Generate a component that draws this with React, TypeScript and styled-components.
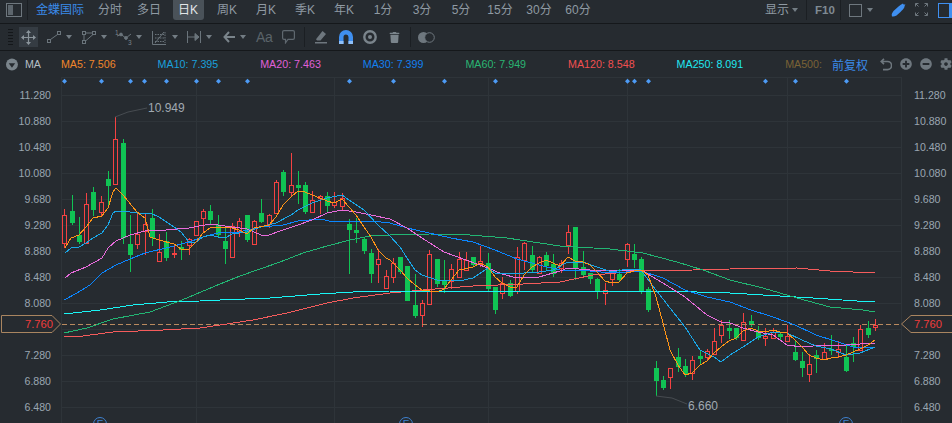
import React from "react";
import styled, { createGlobalStyle } from "styled-components";
import { FaCog, FaMinusCircle, FaPlusCircle, FaTrash } from "react-icons/fa";

const Global = createGlobalStyle`
  html, body { margin: 0; padding: 0; background: #262b30; overflow: hidden; }
  #root { width: 952px; height: 423px; }
`;

const FONT = `"Liberation Sans", "Noto Sans CJK SC", sans-serif`;

const Page = styled.div`
  width: 952px;
  height: 423px;
  display: flex;
  flex-direction: column;
  overflow: hidden;
  background: #262b30;
  font-family: ${FONT};
  color: #8f9aa3;
`;

const TopBar = styled.div`
  height: 23px;
  flex: none;
  display: flex;
  align-items: flex-start;
  border-bottom: 1px solid #15181b;
  font-size: 12px;
  overflow: hidden;
`;

const PanelToggle = styled.div`
  width: 14px;
  height: 12px;
  margin: 3px 0 0 6px;
  border: 1px solid #6e777e;
  display: flex;
  &::before { content: ""; width: 5px; margin: 1px; background: #5d666d; }
`;

const VSep = styled.div<{ $ml: number; $h?: number }>`
  width: 1px;
  height: ${(p) => p.$h ?? 20}px;
  margin-left: ${(p) => p.$ml}px;
  background: #1b1f23;
`;

const Brand = styled.div`
  width: 48px;
  margin-left: 8px;
  line-height: 20px;
  color: #3a8ae8;
  white-space: nowrap;
`;

const Tabs = styled.div`
  display: flex;
  margin-left: 6.5px;
`;

const Tab = styled.div<{ $active?: boolean }>`
  width: 31px;
  margin: 0 4px;
  height: 20px;
  line-height: 20px;
  text-align: center;
  white-space: nowrap;
  border-radius: 0 0 3px 3px;
  background: ${(p) => (p.$active ? "#4a5259" : "transparent")};
  color: ${(p) => (p.$active ? "#e2e6e8" : "#8f9aa3")};
`;

const BarRight = styled.div`
  margin-left: auto;
  display: flex;
  align-items: flex-start;
`;

const ShowLabel = styled.div`
  line-height: 20px;
  display: flex;
  align-items: center;
  gap: 3px;
`;

const Caret = styled.span<{ $c?: string }>`
  display: inline-block;
  width: 0;
  height: 0;
  flex: none;
  border-left: 3.5px solid transparent;
  border-right: 3.5px solid transparent;
  border-top: 4px solid ${(p) => p.$c ?? "#737d84"};
`;

const F10 = styled.div`
  margin-left: 8px;
  width: 18px;
  line-height: 20px;
  font-size: 11.5px;
  font-weight: 700;
  color: #7f8a92;
`;

const ColorBox = styled.div`
  display: flex;
  align-items: center;
  gap: 5px;
  height: 20px;
  margin-left: 8px;
`;

const Square = styled.div`
  width: 11px;
  height: 11px;
  border: 1px solid #6e777e;
`;

const TopIcon = styled.svg<{ $ml: number }>`
  flex: none;
  margin: 3px 0 0 ${(p) => p.$ml}px;
`;

const LayoutIcon = styled.div`
  flex: none;
  width: 14px;
  height: 13px;
  margin: 3px -1px 0 10px;
  border: 1px solid #3f8ff0;
  border-right: 0;
  display: flex;
  justify-content: flex-end;
  &::after { content: ""; width: 4px; background: #3f8ff0; margin: 0; }
`;

const ToolBar = styled.div`
  height: 26px;
  flex: none;
  display: flex;
  align-items: center;
  padding-left: 8px;
  border-bottom: 1px solid #15181b;
`;

const Grip = styled.div`
  width: 5px;
  height: 17px;
  background: repeating-linear-gradient(to bottom, #14171a 0 1px, transparent 1px 3px);
`;

const MoveButton = styled.div`
  width: 19px;
  height: 20px;
  margin-left: 6px;
  display: flex;
  align-items: center;
  justify-content: center;
  background: #353c43;
`;

const Tool = styled.div<{ $ml: number; $gap?: number }>`
  display: flex;
  align-items: center;
  gap: ${(p) => p.$gap ?? 5}px;
  margin-left: ${(p) => p.$ml}px;
  flex: none;
  color: #6a747b;
`;

const AaLabel = styled.span`
  width: 15px;
  font-size: 14px;
  color: #5a6369;
  letter-spacing: -0.4px;
  white-space: nowrap;
`;

const MaBar = styled.div`
  height: 26px;
  flex: none;
  display: flex;
  align-items: center;
  padding-left: 6px;
  font-size: 10.7px;
  white-space: nowrap;
`;

const MaName = styled.span`
  margin-left: 7px;
  width: 35px;
  color: #b6bec4;
  margin-right: 4px;
`;

const MaList = styled.div`
  display: flex;
  gap: 42px;
`;

const MaItem = styled.span<{ $c: string }>`
  color: ${(p) => p.$c};
`;

const Adjust = styled.span`
  margin-left: 10px;
  font-size: 12px;
  color: #3a8ae8;
`;

const MaTools = styled.div`
  display: flex;
  align-items: center;
  margin-left: 12px;
  gap: 8px;
  color: #6e777e;
`;

const ChartGrid = styled.div`
  flex: 1;
  position: relative;
  display: grid;
  grid-template-columns: 61px 841px 50px;
  min-height: 0;
  overflow: hidden;
`;

const Axis = styled.div<{ $right?: boolean }>`
  display: flex;
  flex-direction: column;
  padding-top: 5px;
  font-size: 10.6px;
  color: #9aa6b0;
  text-align: ${(p) => (p.$right ? "left" : "right")};
  padding-${(p) => (p.$right ? "left" : "right")}: ${(p) => (p.$right ? 12 : 10)}px;
`;

const AxisLabel = styled.div<{ $hidden?: boolean }>`
  height: 26px;
  line-height: 26px;
  flex: none;
  visibility: ${(p) => (p.$hidden ? "hidden" : "visible")};
`;

const Plot = styled.svg`
  display: block;
  width: 841px;
  height: 346px;
`;

const PriceTag = styled.div<{ $right?: boolean }>`
  position: absolute;
  top: 238px;
  ${(p) => (p.$right ? "left: 901px; width: 51px;" : "left: 1px; width: 60px;")}
  height: 18px;
  line-height: 18px;
  font-size: 11.2px;
  color: #f03c3c;
  box-sizing: border-box;
  ${(p) => (p.$right ? "padding-left: 13px;" : "padding-right: 8px; text-align: right;")}
`;

const TagShape = styled.svg`
  position: absolute;
  left: 0;
  top: 0;
  width: 100%;
  height: 100%;
`;

const TagText = styled.span`
  position: relative;
`;

type C = [number, number, number, number, number, "r" | "g"];
const candles: C[] = [
  [64,215,243,209,248,"r"],[72,211,223,195,225,"g"],[79,235,242,217,244,"g"],[86,204,243,193,244,"r"],
  [93,192,210,187,216,"g"],[101,202,212,196,216,"r"],[108,179,186,171,205,"g"],[115,139,184,117,185,"r"],
  [123,143,238,139,244,"g"],[130,244,255,215,272,"g"],[137,234,244,214,249,"r"],[145,224,231,214,255,"r"],
  [152,218,238,209,246,"g"],[159,252,261,234,262,"r"],[166,241,258,232,261,"g"],[174,253,254,245,258,"r"],
  [181,247,250,241,260,"g"],[189,239,245,238,255,"r"],[196,221,235,221,235,"r"],[203,211,218,209,232,"r"],
  [210,211,220,205,225,"g"],[218,225,235,215,238,"g"],[225,241,249,228,264,"g"],[232,226,257,223,257,"r"],
  [239,221,231,218,237,"r"],[247,215,240,215,242,"g"],[254,221,244,220,244,"r"],[261,213,222,199,223,"g"],
  [269,215,224,214,228,"r"],[276,182,213,180,214,"r"],[283,172,192,170,196,"g"],[291,185,192,153,197,"r"],
  [298,185,188,171,204,"g"],[305,185,212,182,214,"g"],[312,200,212,191,213,"r"],[320,196,198,195,214,"r"],
  [327,196,206,192,212,"g"],[334,202,205,192,208,"r"],[342,198,206,193,210,"r"],[349,224,230,219,274,"g"],
  [356,230,233,218,243,"g"],[364,239,251,238,254,"g"],[371,253,274,249,283,"g"],[378,259,264,249,283,"r"],
  [386,276,288,270,288,"r"],[393,263,277,258,283,"r"],[400,257,272,257,274,"g"],[407,266,301,266,301,"g"],
  [415,305,316,274,318,"g"],[422,303,315,300,327,"r"],[429,254,304,250,305,"r"],[437,259,284,259,287,"g"],
  [444,281,285,260,293,"g"],[451,269,281,264,289,"r"],[459,259,277,252,278,"r"],[466,260,270,252,271,"r"],
  [473,257,265,257,267,"g"],[480,261,264,246,267,"r"],[488,263,289,253,292,"g"],[495,287,310,287,314,"g"],
  [502,283,293,277,299,"r"],[510,283,296,280,297,"g"],[517,257,291,247,294,"r"],[524,243,260,242,270,"r"],
  [532,255,270,246,273,"g"],[539,257,273,256,273,"r"],[546,255,266,252,270,"g"],[553,264,274,254,277,"g"],
  [561,263,268,260,273,"r"],[568,232,245,225,254,"r"],[575,227,269,227,280,"g"],[583,267,275,251,277,"g"],
  [590,273,279,273,284,"g"],[597,279,291,278,299,"g"],[605,290,293,283,305,"r"],[612,273,279,270,286,"r"],
  [619,274,280,269,282,"g"],[627,244,259,243,267,"r"],[634,254,260,244,268,"g"],[641,259,292,257,294,"g"],
  [648,289,310,287,312,"g"],[656,368,381,361,396,"g"],[663,380,388,376,390,"g"],[670,368,377,368,389,"r"],
  [678,357,367,348,372,"g"],[685,366,374,359,377,"g"],[692,360,373,356,380,"r"],[700,356,359,350,364,"g"],
  [707,351,357,349,360,"r"],[714,341,354,328,355,"r"],[721,325,335,320,343,"r"],[729,328,331,320,339,"g"],
  [736,328,338,328,340,"g"],[743,322,340,313,341,"r"],[751,321,325,315,327,"g"],[758,332,338,326,340,"g"],
  [765,336,338,328,346,"r"],[773,332,338,328,338,"r"],[780,334,337,332,341,"g"],[787,336,341,325,342,"r"],
  [795,352,360,340,361,"g"],[802,361,368,352,377,"g"],[809,364,374,354,382,"r"],[816,355,359,350,373,"g"],
  [824,352,359,343,360,"r"],[831,349,351,335,355,"g"],[838,349,352,341,358,"r"],[846,357,371,345,372,"g"],
  [853,343,347,337,362,"g"],[860,329,350,325,351,"r"],[868,328,335,321,338,"g"],[875,325,327,319,331,"r"],
];

const lines: { c: string; p: string }[] = [
  { c: "#f55c5c", p: "64,337 83,336 113,332 163,330 200,328 220,325 253,320 287,313 327,303 353,298 390,293 423,290 473,286 523,284 560,282 593,275 640,271 693,270 730,269 797,268 830,271 875,273" },
  { c: "#19f5f5", p: "64,314 100,310 133,305 167,302 200,301 220,300 270,298 320,294 353,292 390,291 560,291 680,291 697,292 730,293 763,295 813,298 857,301 875,302" },
  { c: "#22b573", p: "64,333 87,328 113,319 150,312 182,300 220,284 240,276 260,269 280,262 303,253 327,246 350,240 370,236 390,235 430,234 470,235 507,238 533,242 560,246 610,249 643,253 677,262 703,270 730,280 763,288 797,298 830,307 863,310 875,312" },
  { c: "#0a86ff", p: "64,300 77,293 90,285 102,273 116,265 130,259 145,253 166,248 189,242 203,237 218,233 239,232 261,227 283,225 298,221 320,219 334,222 349,221 371,221 390,223 407,228 429,233 451,238 473,242 495,250 517,259 539,265 560,270 590,271 612,273 641,271 663,278 685,290 707,297 730,302 751,310 773,317 795,325 816,335 838,342 853,347 875,348" },
  { c: "#e96bdc", p: "65,278 71,273 86,267 102,258 108,248 116,241 130,235 145,231 166,230 189,228 210,224 218,225 232,227 247,229 261,235 269,235 283,230 298,225 312,220 327,213 342,210 356,212 371,215 390,219 407,228 422,238 444,252 466,260 488,268 502,274 517,278 539,277 560,271 568,268 590,270 612,270 641,270 663,283 685,297 707,315 721,322 730,323 743,328 758,332 773,335 787,345 802,347 824,345 846,345 875,343" },
  { c: "#19a7e8", p: "65,253 71,248 79,247 86,243 93,238 102,233 108,225 113,213 116,211 123,211 137,213 150,213 159,217 174,227 181,232 189,242 196,242 203,237 210,235 218,237 225,238 232,234 247,232 261,227 276,223 291,215 298,210 312,203 327,198 342,195 349,200 364,210 378,225 390,236 400,247 407,258 415,270 422,275 437,280 459,281 473,278 488,268 495,273 510,273 524,273 539,272 553,270 568,262 583,262 597,267 612,272 627,269 641,270 656,290 670,308 685,327 700,350 714,357 721,362 730,355 743,347 758,337 773,332 787,333 802,340 816,346 831,349 846,355 860,353 875,347" },
  { c: "#ff9416", p: "65,248 71,238 79,235 86,227 93,218 102,216 108,208 113,192 116,188 123,195 137,212 145,218 150,237 159,240 174,244 181,249 189,249 196,242 203,233 210,228 220,227 232,228 239,230 247,234 254,228 269,225 276,217 283,205 291,197 298,191 305,192 312,195 320,198 327,201 334,203 342,199 349,207 356,215 364,227 371,237 378,250 386,258 390,260 400,270 407,278 415,285 422,290 437,292 444,289 451,280 459,270 473,267 480,263 488,267 495,277 502,283 510,287 517,287 524,275 532,267 539,263 546,260 553,263 560,266 568,257 575,261 583,262 590,265 597,272 605,281 612,283 619,282 627,273 634,271 641,270 648,275 656,297 663,323 670,350 678,365 685,375 692,373 700,365 707,361 714,353 721,347 729,341 736,338 743,331 751,328 758,331 765,332 773,330 780,332 787,333 795,340 802,347 809,355 816,358 824,360 831,358 838,357 846,355 853,352 860,349 868,345 875,340" },
];

const diamonds = [64, 101, 130, 144, 166, 196, 218, 247, 349, 393, 444, 495, 627, 634, 648, 765, 795, 846];
const grids = [95, 121, 147, 173, 199, 225, 251, 277, 303, 329, 355, 381, 407];
const vGrids = [196, 334, 488, 627, 787];
const events = [100, 406, 846];
const axis = ["11.280", "10.880", "10.480", "10.080", "9.680", "9.280", "8.880", "8.480", "8.080", "7.680", "7.280", "6.880", "6.480"];
const tabs = ["分时", "多日", "日K", "周K", "月K", "季K", "年K", "1分", "3分", "5分", "15分", "30分", "60分"];
const mas: [string, string][] = [
  ["MA5: 7.506", "#f0862a"], ["MA10: 7.395", "#1aa0dc"], ["MA20: 7.463", "#e060d8"], ["MA30: 7.399", "#1380f0"],
  ["MA60: 7.949", "#2ab573"], ["MA120: 8.548", "#f05050"], ["MA250: 8.091", "#20e8f0"], ["MA500:", "#7a6236"],
];

const Ic = ({ w, h = 16, children }: { w: number; h?: number; children: React.ReactNode }) => (
  <svg width={w} height={h} viewBox={`0 0 ${w} ${h}`} fill="none" stroke="#6a747b" strokeWidth={1}>{children}</svg>
);

export default function App() {
  return (
    <Page>
      <Global />
      <TopBar>
        <PanelToggle />
        <VSep $ml={5} />
        <Brand>金蝶国际</Brand>
        <Tabs>
          {tabs.map((t) => (
            <Tab key={t} $active={t === "日K"}>{t}</Tab>
          ))}
        </Tabs>
        <BarRight>
          <ShowLabel>显示<Caret /></ShowLabel>
          <VSep $ml={8} />
          <F10>F10</F10>
          <VSep $ml={7} />
          <ColorBox><Square /><Caret /></ColorBox>
          <TopIcon $ml={18} width={15} height={14} viewBox="0 0 15 14">
            <path d="M1 13.5 C0 11 1.5 9.5 2.5 8 L7.5 3.5 C9 2 10.5 1 12 .5 L12.5 1.5 L14.5 1.5 L13.5 3 L13.5 4 C12.5 6 11 7.5 9.5 9 L5.5 12.5 C4 13.5 2.5 13.8 1 13.5 Z" fill="#3f8ff0" />
          </TopIcon>
          <TopIcon $ml={9} width={13} height={13} viewBox="0 0 13 13" fill="none" stroke="#6e777e">
            <path d="M.5 3.5V.5H3.5M.7 .7L3.5 3.5M9.5 .5H12.5V3.5M12.3 .7L9.5 3.5M.5 9.5V12.5H3.5M.7 12.3L3.5 9.5M12.5 9.5V12.5H9.5M12.3 12.3L9.5 9.5" />
          </TopIcon>
          <LayoutIcon />
        </BarRight>
      </TopBar>

      <ToolBar>
        <Grip />
        <MoveButton>
          <svg width="15" height="15" viewBox="0 0 15 15" fill="#8a949b">
            <path d="M7.5 0L10 3H8.1V6.9H12V5L15 7.5L12 10V8.1H8.1V12H10L7.5 15L5 12H6.9V8.1H3V10L0 7.5L3 5V6.9H6.9V3H5Z" />
          </svg>
        </MoveButton>
        <Tool $ml={9}>
          <Ic w={14} h={14}>
            <rect x=".5" y="9.5" width="3" height="3" /><rect x="10.5" y="1.5" width="3" height="3" /><path d="M3.5 9.5L10.5 4.5" />
          </Ic>
          <Caret />
        </Tool>
        <Tool $ml={10}>
          <Ic w={14} h={14}>
            <rect x=".5" y="1.5" width="3" height="3" /><rect x="10.5" y="1.5" width="3" height="3" /><rect x=".5" y="10.5" width="3" height="3" />
            <path d="M3.5 3H10.5M11 4.5L3.5 11M2 4.5V10.5" />
          </Ic>
          <Caret />
        </Tool>
        <Tool $ml={8} $gap={3}>
          <svg width="18" height="18" viewBox="0 0 18 18" fill="none" stroke="#6a747b">
            <text x="0" y="7" fontSize="6.5" fill="#7a848b" stroke="none" fontFamily={FONT}>1</text>
            <text x="13" y="17" fontSize="6.5" fill="#7a848b" stroke="none" fontFamily={FONT}>3</text>
            <path d="M2 8L6 6.5L11 10L16 6" /><circle cx="6" cy="6.5" r="1.4" fill="#6a747b" /><circle cx="11" cy="10" r="1.4" fill="#6a747b" />
          </svg>
          <Caret />
        </Tool>
        <Tool $ml={10}>
          <Ic w={15} h={16}>
            <path d="M.5 2V15.5H14" /><path d="M3 5.5H13M3 9H13M3 12.5H13" strokeDasharray="1.5 1" /><path d="M3 14L12 3" /><path d="M13 3V14" strokeDasharray="1.5 1" />
          </Ic>
          <Caret />
        </Tool>
        <Tool $ml={9}>
          <Ic w={14} h={14}>
            <path d="M.5 1V13M13.5 1V13M1 7H12" /><path d="M8 3.5L12 7L8 10.5Z" fill="#6a747b" />
          </Ic>
          <Caret />
        </Tool>
        <Tool $ml={11}>
          <svg width="12" height="12" viewBox="0 0 12 12" fill="none" stroke="#7a848b" strokeWidth="2">
            <path d="M6 1L1.5 6L6 11M1.5 6H12" />
          </svg>
          <Caret />
        </Tool>
        <Tool $ml={10}><AaLabel>Aa</AaLabel></Tool>
        <Tool $ml={11}>
          <svg width="13" height="14" viewBox="0 0 13 14" fill="none" stroke="#5f686f" strokeWidth="1.2">
            <path d="M2 .6H11Q12.4 .6 12.4 2V8Q12.4 9.4 11 9.4H6L3.5 12.8V9.4H2Q.6 9.4 .6 8V2Q.6 .6 2 .6Z" />
          </svg>
        </Tool>
        <VSep $ml={9} $h={20} />
        <Tool $ml={10}>
          <svg width="12" height="13" viewBox="0 0 12 13" fill="#6e777e">
            <path d="M7.5 0L11 3L5.5 9.5H2L1 8.2Z" /><rect x="0" y="11" width="12" height="1.5" />
          </svg>
        </Tool>
        <Tool $ml={12}>
          <svg width="14" height="14" viewBox="0 0 14 14">
            <path d="M0 7A7 7 0 0 1 14 7V14H9.5V7A2.5 2.5 0 0 0 4.5 7V14H0Z" fill="#3f8ff0" />
            <path d="M0 11H4.5V14H0ZM9.5 11H14V14H9.5Z" fill="#8fc0f8" />
          </svg>
        </Tool>
        <Tool $ml={10}>
          <svg width="14" height="14" viewBox="0 0 14 14" fill="none">
            <circle cx="7" cy="7" r="5.7" stroke="#7a848b" strokeWidth="2.4" /><circle cx="7" cy="7" r="2" fill="#7a848b" />
          </svg>
        </Tool>
        <Tool $ml={12}><FaTrash size={11} color="#7a848b" /></Tool>
        <VSep $ml={10} $h={20} />
        <Tool $ml={7}>
          <svg width="17" height="11" viewBox="0 0 17 11">
            <circle cx="5.5" cy="5.5" r="5.5" fill="#6e777e" /><circle cx="11.5" cy="5.5" r="4.8" fill="#262b30" stroke="#6e777e" />
          </svg>
        </Tool>
      </ToolBar>

      <MaBar>
        <svg width="13" height="13" viewBox="0 0 13 13">
          <circle cx="6.5" cy="6.5" r="6.5" fill="#7a848b" /><path d="M3 5H10L6.5 10Z" fill="#262b30" />
        </svg>
        <MaName>MA</MaName>
        <MaList>
          {mas.map(([t, c]) => <MaItem key={t} $c={c}>{t}</MaItem>)}
        </MaList>
        <Adjust>前复权</Adjust>
        <MaTools>
          <svg width="12" height="13" viewBox="0 0 12 13" fill="none" stroke="#6e777e" strokeWidth="1.6">
            <path d="M4 .8L1.2 3.5L4 6.2M1.5 3.5H7.5A3.8 3.8 0 0 1 7.5 11.6H3" />
          </svg>
          <FaPlusCircle size={12} />
          <FaMinusCircle size={12} />
          <FaCog size={12} />
        </MaTools>
      </MaBar>

      <ChartGrid>
        <Axis>{axis.map((a) => <AxisLabel key={a} $hidden={a === "7.680"}>{a}</AxisLabel>)}</Axis>
        <Plot viewBox="61 77 841 346">
          <g stroke="#2e3439" strokeWidth="1" shapeRendering="crispEdges">
            <path d="M61 77.5H902M61.5 77V423M901.5 77V423" />
            {grids.map((y) => <path key={y} d={`M61 ${y + 0.5}H902`} />)}
            {vGrids.map((x) => <path key={x} d={`M${x + 0.5} 77V423`} />)}
          </g>
          {diamonds.map((x) => (
            <path key={x} d={`M${x + 0.5} 78.8L${x + 3} 81.3L${x + 0.5} 83.8L${x - 2} 81.3Z`} fill="#4d9bf5" />
          ))}
          <g shapeRendering="crispEdges">
            {candles.map(([x, t, b, wt, wb, k], i) =>
              k === "r" ? (
                <g key={i} stroke="#f54242" fill="none">
                  <path d={`M${x + 0.5} ${wt}V${t}M${x + 0.5} ${b}V${wb}`} />
                  <rect x={x - 1.5} y={t + 0.5} width={4} height={Math.max(b - t, 1)} />
                </g>
              ) : (
                <g key={i}>
                  <path d={`M${x + 0.5} ${wt}V${wb}`} stroke="#10c454" />
                  <rect x={x - 2} y={t} width={5} height={Math.max(b - t, 1)} fill="#10c454" />
                </g>
              )
            )}
          </g>
          <path d="M62 324.5H902" stroke="#b98a5f" strokeWidth="1" strokeDasharray="5 3" shapeRendering="crispEdges" />
          {lines.map((l) => (
            <polyline key={l.c} points={l.p} fill="none" stroke={l.c} strokeWidth="1" shapeRendering="crispEdges" />
          ))}
          <path d="M115 117L128 112L147 108" stroke="#474c51" fill="none" />
          <text x="148" y="111.5" fontSize="12" fill="#a0a9b0" fontFamily={FONT}>10.949</text>
          <path d="M656 396L672 398L687 404" stroke="#474c51" fill="none" />
          <text x="688" y="409.5" fontSize="12" fill="#a0a9b0" fontFamily={FONT}>6.660</text>
          {events.map((x) => (
            <g key={x}>
              <circle cx={x} cy={424} r={6.5} fill="#262b30" stroke="#3f82d0" />
              <text x={x} y={428} textAnchor="middle" fontSize="10" fill="#3f82d0" fontFamily={FONT}>E</text>
            </g>
          ))}
        </Plot>
        <Axis $right>{axis.map((a) => <AxisLabel key={a} $hidden={a === "7.680"}>{a}</AxisLabel>)}</Axis>
        <PriceTag>
          <TagShape viewBox="0 0 60 18" preserveAspectRatio="none">
            <path d="M.5 .5H51L59.5 9L51 17.5H.5Z" fill="#262b30" stroke="#a98560" />
          </TagShape>
          <TagText>7.760</TagText>
        </PriceTag>
        <PriceTag $right>
          <TagShape viewBox="0 0 51 18" preserveAspectRatio="none">
            <path d="M51 .5H10L.5 9L10 17.5H51" fill="#262b30" stroke="#a98560" />
          </TagShape>
          <TagText>7.760</TagText>
        </PriceTag>
      </ChartGrid>
    </Page>
  );
}
